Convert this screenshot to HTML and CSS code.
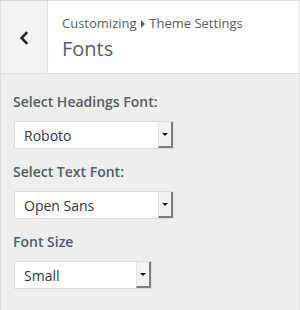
FILE: index.html
```html
<!DOCTYPE html>
<html>
<head>
<meta charset="utf-8">
<link rel="stylesheet" href="styles.css">
</head>
<body>
<div class="panel">
  <div class="header">
    <div class="back">
      <svg width="10" height="14" viewBox="0 0 10 14"><path d="M8.2 1.2 L2.6 7 L8.2 12.8" fill="none" stroke="#23282d" stroke-width="2.6"/></svg>
    </div>
    <div class="titles">
      <div class="crumb">Customizing <span class="tri"></span> Theme Settings</div>
      <div class="title">Fonts</div>
    </div>
  </div>
  <div class="body">
    <div class="field">
      <div class="label">Select Headings Font:</div>
      <div class="select wide"><span class="val">Roboto</span><span class="btn"><span class="arrow"></span></span></div>
    </div>
    <div class="field">
      <div class="label">Select Text Font:</div>
      <div class="select wide"><span class="val">Open Sans</span><span class="btn"><span class="arrow"></span></span></div>
    </div>
    <div class="field">
      <div class="label">Font Size</div>
      <div class="select narrow"><span class="val">Small</span><span class="btn"><span class="arrow"></span></span></div>
    </div>
  </div>
</div>
</body>
</html>
```
FILE: styles.css
```css
html, body {
  margin: 0;
  padding: 0;
  background: #eeeeee;
  font-family: "Open Sans", "Liberation Sans", sans-serif;
}
.panel {
  width: 300px;
  height: 310px;
  box-sizing: border-box;
  border: 1px solid #dddddd;
  border-bottom: none;
  background: #eeeeee;
}
.header {
  display: flex;
  height: 72px;
  background: #ffffff;
  border-bottom: 1px solid #dddddd;
}
.back {
  width: 46px;
  background: #f3f3f3;
  border-right: 1px solid #dddddd;
  display: flex;
  align-items: center;
  justify-content: center;
}
.back svg {
  margin-left: 0px;
  margin-top: 2px;
}
.titles {
  padding-left: 14px;
  padding-top: 12px;
  color: #555d66;
}
.crumb {
  font-size: 13px;
  line-height: 20px;
}
.tri {
  display: inline-block;
  width: 0;
  height: 0;
  border-top: 4px solid transparent;
  border-bottom: 4px solid transparent;
  border-left: 4px solid #555d66;
  margin: 0 1px 0 1px;
  vertical-align: 0px;
}
.title {
  font-size: 20px;
  line-height: 28px;
  margin-top: 2px;
}
.body {
  padding: 18px 12px 0 12px;
}
.field {
  margin-bottom: 13px;
}
.label {
  font-size: 14px;
  font-weight: 600;
  color: #555d66;
  line-height: 20px;
  margin-bottom: 9px;
}
.select {
  display: flex;
  box-sizing: border-box;
  height: 28px;
  margin-left: 1px;
  background: #ffffff;
  border: 1px solid #dddddd;
}
.wide { width: 160px; }
.narrow { width: 138px; }
.val {
  flex: 1;
  font-size: 14px;
  color: #32373c;
  line-height: 27px;
  padding-left: 9px;
}
.btn {
  width: 15px;
  box-sizing: border-box;
  background: #f2f2f2;
  border-left: 1px solid #e4e4e4;
  border-right: 2px solid #7d7d7d;
  border-bottom: 2px solid #7d7d7d;
  display: flex;
  align-items: center;
  justify-content: center;
}
.arrow {
  width: 0;
  height: 0;
  border-left: 3px solid transparent;
  border-right: 3px solid transparent;
  border-top: 3px solid #111111;
  margin-top: 1px;
}
```
